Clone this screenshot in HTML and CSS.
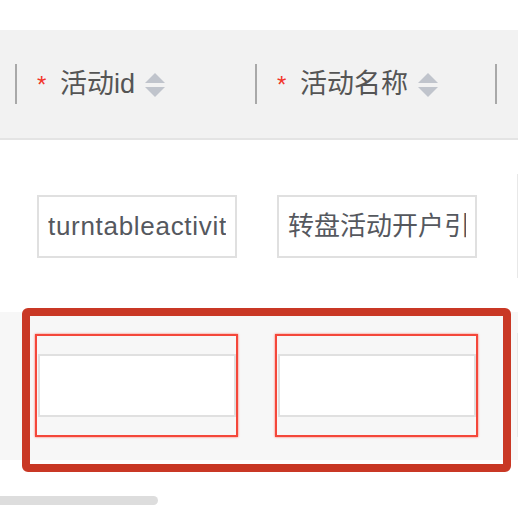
FILE: index.html
```html
<!DOCTYPE html>
<html lang="zh-CN">
<head>
<meta charset="utf-8">
<title>表格</title>
<link rel="stylesheet" href="styles.css">
</head>
<body>
<div class="page">
  <div class="table">
    <div class="thead">
      <div class="th">
        <span class="sep"></span>
        <span class="req">*</span>
        <span class="label">活动id</span>
        <svg class="sort" width="20" height="24" viewBox="0 0 20 24"><path d="M10 0 L20 10 L0 10 Z" fill="#c0c4cc"/><path d="M0 14 L20 14 L10 24 Z" fill="#c0c4cc"/></svg>
      </div>
      <div class="th">
        <span class="sep"></span>
        <span class="req">*</span>
        <span class="label">活动名称</span>
        <svg class="sort" width="20" height="24" viewBox="0 0 20 24"><path d="M10 0 L20 10 L0 10 Z" fill="#c0c4cc"/><path d="M0 14 L20 14 L10 24 Z" fill="#c0c4cc"/></svg>
      </div>
      <div class="th">
        <span class="sep"></span>
      </div>
    </div>
    <div class="tr">
      <div class="td"><div class="field"><span class="value latin">turntableactivity_open</span></div></div>
      <div class="td"><div class="field"><span class="value">转盘活动开户引导</span></div></div>
      <div class="td"><div class="area"></div></div>
    </div>
    <div class="tr tr-alt">
      <div class="td"><div class="err"><div class="field"></div></div></div>
      <div class="td"><div class="err"><div class="field"></div></div></div>
      <div class="td"><div class="area"></div></div>
    </div>
  </div>
  <div class="highlight"></div>
  <div class="scrollbar"></div>
</div>
</body>
</html>
```

FILE: styles.css
```css
html, body {
  margin: 0;
  padding: 0;
  background: #ffffff;
  overflow: hidden;
}
body {
  width: 518px;
  height: 508px;
  font-family: "Liberation Sans", "Noto Sans CJK SC", sans-serif;
}
.page {
  position: relative;
  padding-top: 30px;
}
.table {
  width: 518px;
  overflow: hidden;
}
.thead {
  display: flex;
  height: 108px;
  background: #f2f2f2;
  border-bottom: 2px solid #e4e4e4;
  padding-left: 15px;
}
.th {
  flex: 0 0 240px;
  display: flex;
  align-items: center;
}
.sep {
  width: 2px;
  height: 40px;
  background: #a9a9a9;
  margin-right: 20px;
}
.req {
  color: #f2352a;
  font-size: 24px;
  line-height: 1;
  width: 14px;
  margin-top: 2px;
}
.label {
  margin-left: 9px;
  font-size: 27px;
  color: #555555;
  line-height: 1;
}
.sort {
  margin-left: 10px;
  margin-top: 2px;
}
.tr {
  display: flex;
  height: 172px;
  padding-left: 15px;
  align-items: center;
}
.tr-alt {
  height: 148px;
  background: #f7f7f7;
}
.td {
  flex: 0 0 240px;
  padding-left: 22px;
  box-sizing: border-box;
}
.field {
  width: 200px;
  height: 63px;
  box-sizing: border-box;
  border: 2px solid #e0e0e0;
  background: #ffffff;
  padding: 0 9px;
}
.value {
  display: block;
  overflow: hidden;
  white-space: nowrap;
  font-size: 26px;
  line-height: 59px;
  color: #55585e;
}
.latin {
  letter-spacing: 0.7px;
}
.err {
  width: 203px;
  box-sizing: border-box;
  margin-left: -2px;
  border: 2px solid #f4473a;
  box-shadow: 0 0 2px #ff6a5e;
  padding: 18px 2px 18px 1px;
  margin-top: -1px;
}
.err .field {
  width: 198px;
}
.area {
  width: 200px;
  height: 104px;
  box-sizing: border-box;
  border: 2px solid #e8e8e8;
  background: #ffffff;
}
.tr-alt .area {
  margin-top: -2px;
}
.highlight {
  position: absolute;
  left: 22px;
  top: 308px;
  width: 489px;
  height: 164px;
  box-sizing: border-box;
  border: 8px solid #c93825;
  border-radius: 6px;
}
.scrollbar {
  margin-top: 36px;
  margin-left: -6px;
  width: 164px;
  height: 9px;
  border-radius: 5px;
  background: #dddddd;
}
```
